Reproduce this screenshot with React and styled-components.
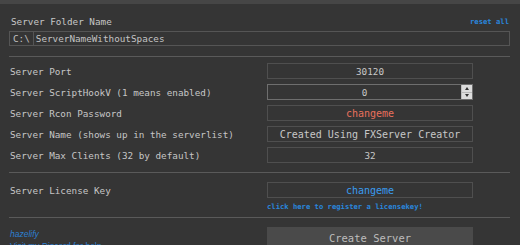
import React from 'react';
import styled, { createGlobalStyle } from 'styled-components';

const Global = createGlobalStyle`
    body {
        margin: 0;
        background: #353535;
        font-family: "DejaVu Sans Mono", "Liberation Mono", monospace;
        color: #c4c4c4;
        overflow: hidden;
    }
`

const TopStrip = styled.div`
    height: 4px;
    background: #464646;
`

const Page = styled.div`
    padding: 9px 10px 0 9px;
`

const Header = styled.div`
    display: flex;
    justify-content: space-between;
    align-items: center;
    height: 16px;
    padding: 0 1px;
`

const Label = styled.span`
    font-size: 9.3px;
    color: #c6c6c6;
    white-space: nowrap;
    padding-left: 1px;
    align-self: ${p => p.$top ? 'start' : 'auto'};
    padding-top: ${p => p.$top ? 3 : 0}px;
`

const SmallLink = styled.a`
    font-size: 7.2px;
    font-weight: bold;
    color: #2a86dc;
    text-decoration: none;
    white-space: nowrap;
`

const FolderBox = styled.div`
    display: flex;
    height: 15px;
    margin-top: 2px;
    border: 1px solid #555;
    box-sizing: border-box;
    align-items: stretch;
`

const Prefix = styled.span`
    display: flex;
    align-items: center;
    padding: 0 3px 0 3px;
    border-right: 1px solid #555;
    font-size: 9.3px;
    color: #c2c2c2;
`

const FolderInput = styled.input`
    flex: 1;
    border: none;
    background: transparent;
    outline: none;
    padding: 0 0 0 2px;
    font-family: inherit;
    font-size: 9.3px;
    color: #c4c4c4;
`

const Divider = styled.hr`
    border: none;
    height: 1px;
    background: #5a5a5a;
    margin: ${p => p.$top}px 0 ${p => p.$bottom}px 0;
`

const Grid = styled.div`
    display: grid;
    grid-template-columns: 258px 206px;
    row-gap: 5px;
    align-items: center;
`

const Field = styled.input`
    height: 16px;
    box-sizing: border-box;
    width: 100%;
    border: 1px solid #4f4f4f;
    background: transparent;
    outline: none;
    text-align: center;
    font-family: inherit;
    font-size: ${p => p.$big ? 10 : 9.3}px;
    color: ${p => p.$color || '#c8c8c8'};
    padding: 0;
`

const SpinWrap = styled.div`
    display: flex;
    height: 16px;
    box-sizing: border-box;
    border: 1px solid #6e6e6e;
`

const SpinValue = styled.input`
    flex: 1;
    min-width: 0;
    border: none;
    background: transparent;
    outline: none;
    text-align: center;
    font-family: inherit;
    font-size: 9.3px;
    color: #c8c8c8;
    padding: 0;
`

const Spinner = styled.div`
    width: 10px;
    display: flex;
    flex-direction: column;
    background: #dcdcdc;
    border-left: 1px solid #bdbdbd;
`

const SpinHalf = styled.div`
    flex: 1;
    display: flex;
    align-items: center;
    justify-content: center;
    border-top: ${p => p.$down ? '1px solid #b8b8b8' : 'none'};
`

const Arrow = styled.span`
    width: 0;
    height: 0;
    border-left: 2.5px solid transparent;
    border-right: 2.5px solid transparent;
    ${p => p.$down
        ? 'border-top: 3px solid #333;'
        : 'border-bottom: 3px solid #333;'}
`

const LicenseCell = styled.div`
    display: flex;
    flex-direction: column;
    gap: 4px;
`

const Footer = styled.div`
    display: grid;
    grid-template-columns: 258px 206px;
`

const Credits = styled.div`
    display: flex;
    flex-direction: column;
    gap: 2px;
    padding-top: 11px;
    padding-left: 1px;
    font-family: "Liberation Sans", Arial, sans-serif;
    font-size: 8.5px;
`

const Credit = styled.a`
    color: #2d7fd0;
    text-decoration: none;
    font-style: ${p => p.$italic ? 'italic' : 'normal'};
`

const CreateButton = styled.button`
    height: 26px;
    margin-top: 9px;
    border: none;
    background: #4a4a4a;
    color: #bdbdbd;
    font-family: inherit;
    font-size: 10.5px;
    padding: 0 0 4px 0;
`

const rows = [
    { label: 'Server Port', value: '30120' },
    { label: 'Server ScriptHookV (1 means enabled)', value: '0', spin: true },
    { label: 'Server Rcon Password', value: 'changeme', color: '#e8705c', big: true },
    { label: 'Server Name (shows up in the serverlist)', value: 'Created Using FXServer Creator', big: true },
    { label: 'Server Max Clients (32 by default)', value: '32' },
]

const App = () =>
    <>
        <Global />
        <TopStrip />
        <Page>
            <Header>
                <Label>Server Folder Name</Label>
                <SmallLink href="#">reset all</SmallLink>
            </Header>
            <FolderBox>
                <Prefix>C:\</Prefix>
                <FolderInput defaultValue="ServerNameWithoutSpaces" />
            </FolderBox>

            <Divider $top={10} $bottom={6} />

            <Grid>
                {
                    rows.map((row, i) =>
                        <React.Fragment key={i}>
                            <Label>{row.label}</Label>
                            {
                                row.spin
                                ?   <SpinWrap>
                                        <SpinValue defaultValue={row.value} />
                                        <Spinner>
                                            <SpinHalf><Arrow /></SpinHalf>
                                            <SpinHalf $down><Arrow $down /></SpinHalf>
                                        </Spinner>
                                    </SpinWrap>
                                :   <Field defaultValue={row.value} $color={row.color} $big={row.big} />
                            }
                        </React.Fragment>
                    )
                }
            </Grid>

            <Divider $top={9} $bottom={9} />

            <Grid>
                <Label $top>Server License Key</Label>
                <LicenseCell>
                    <Field defaultValue="changeme" $color="#3a9cf0" $big />
                    <SmallLink href="#">click here to register a licensekey!</SmallLink>
                </LicenseCell>
            </Grid>

            <Divider $top={6} $bottom={0} />

            <Footer>
                <Credits>
                    <Credit href="#" $italic>hazelify</Credit>
                    <Credit href="#">Visit my Discord for help</Credit>
                </Credits>
                <CreateButton>Create Server</CreateButton>
            </Footer>
        </Page>
    </>

export default App
